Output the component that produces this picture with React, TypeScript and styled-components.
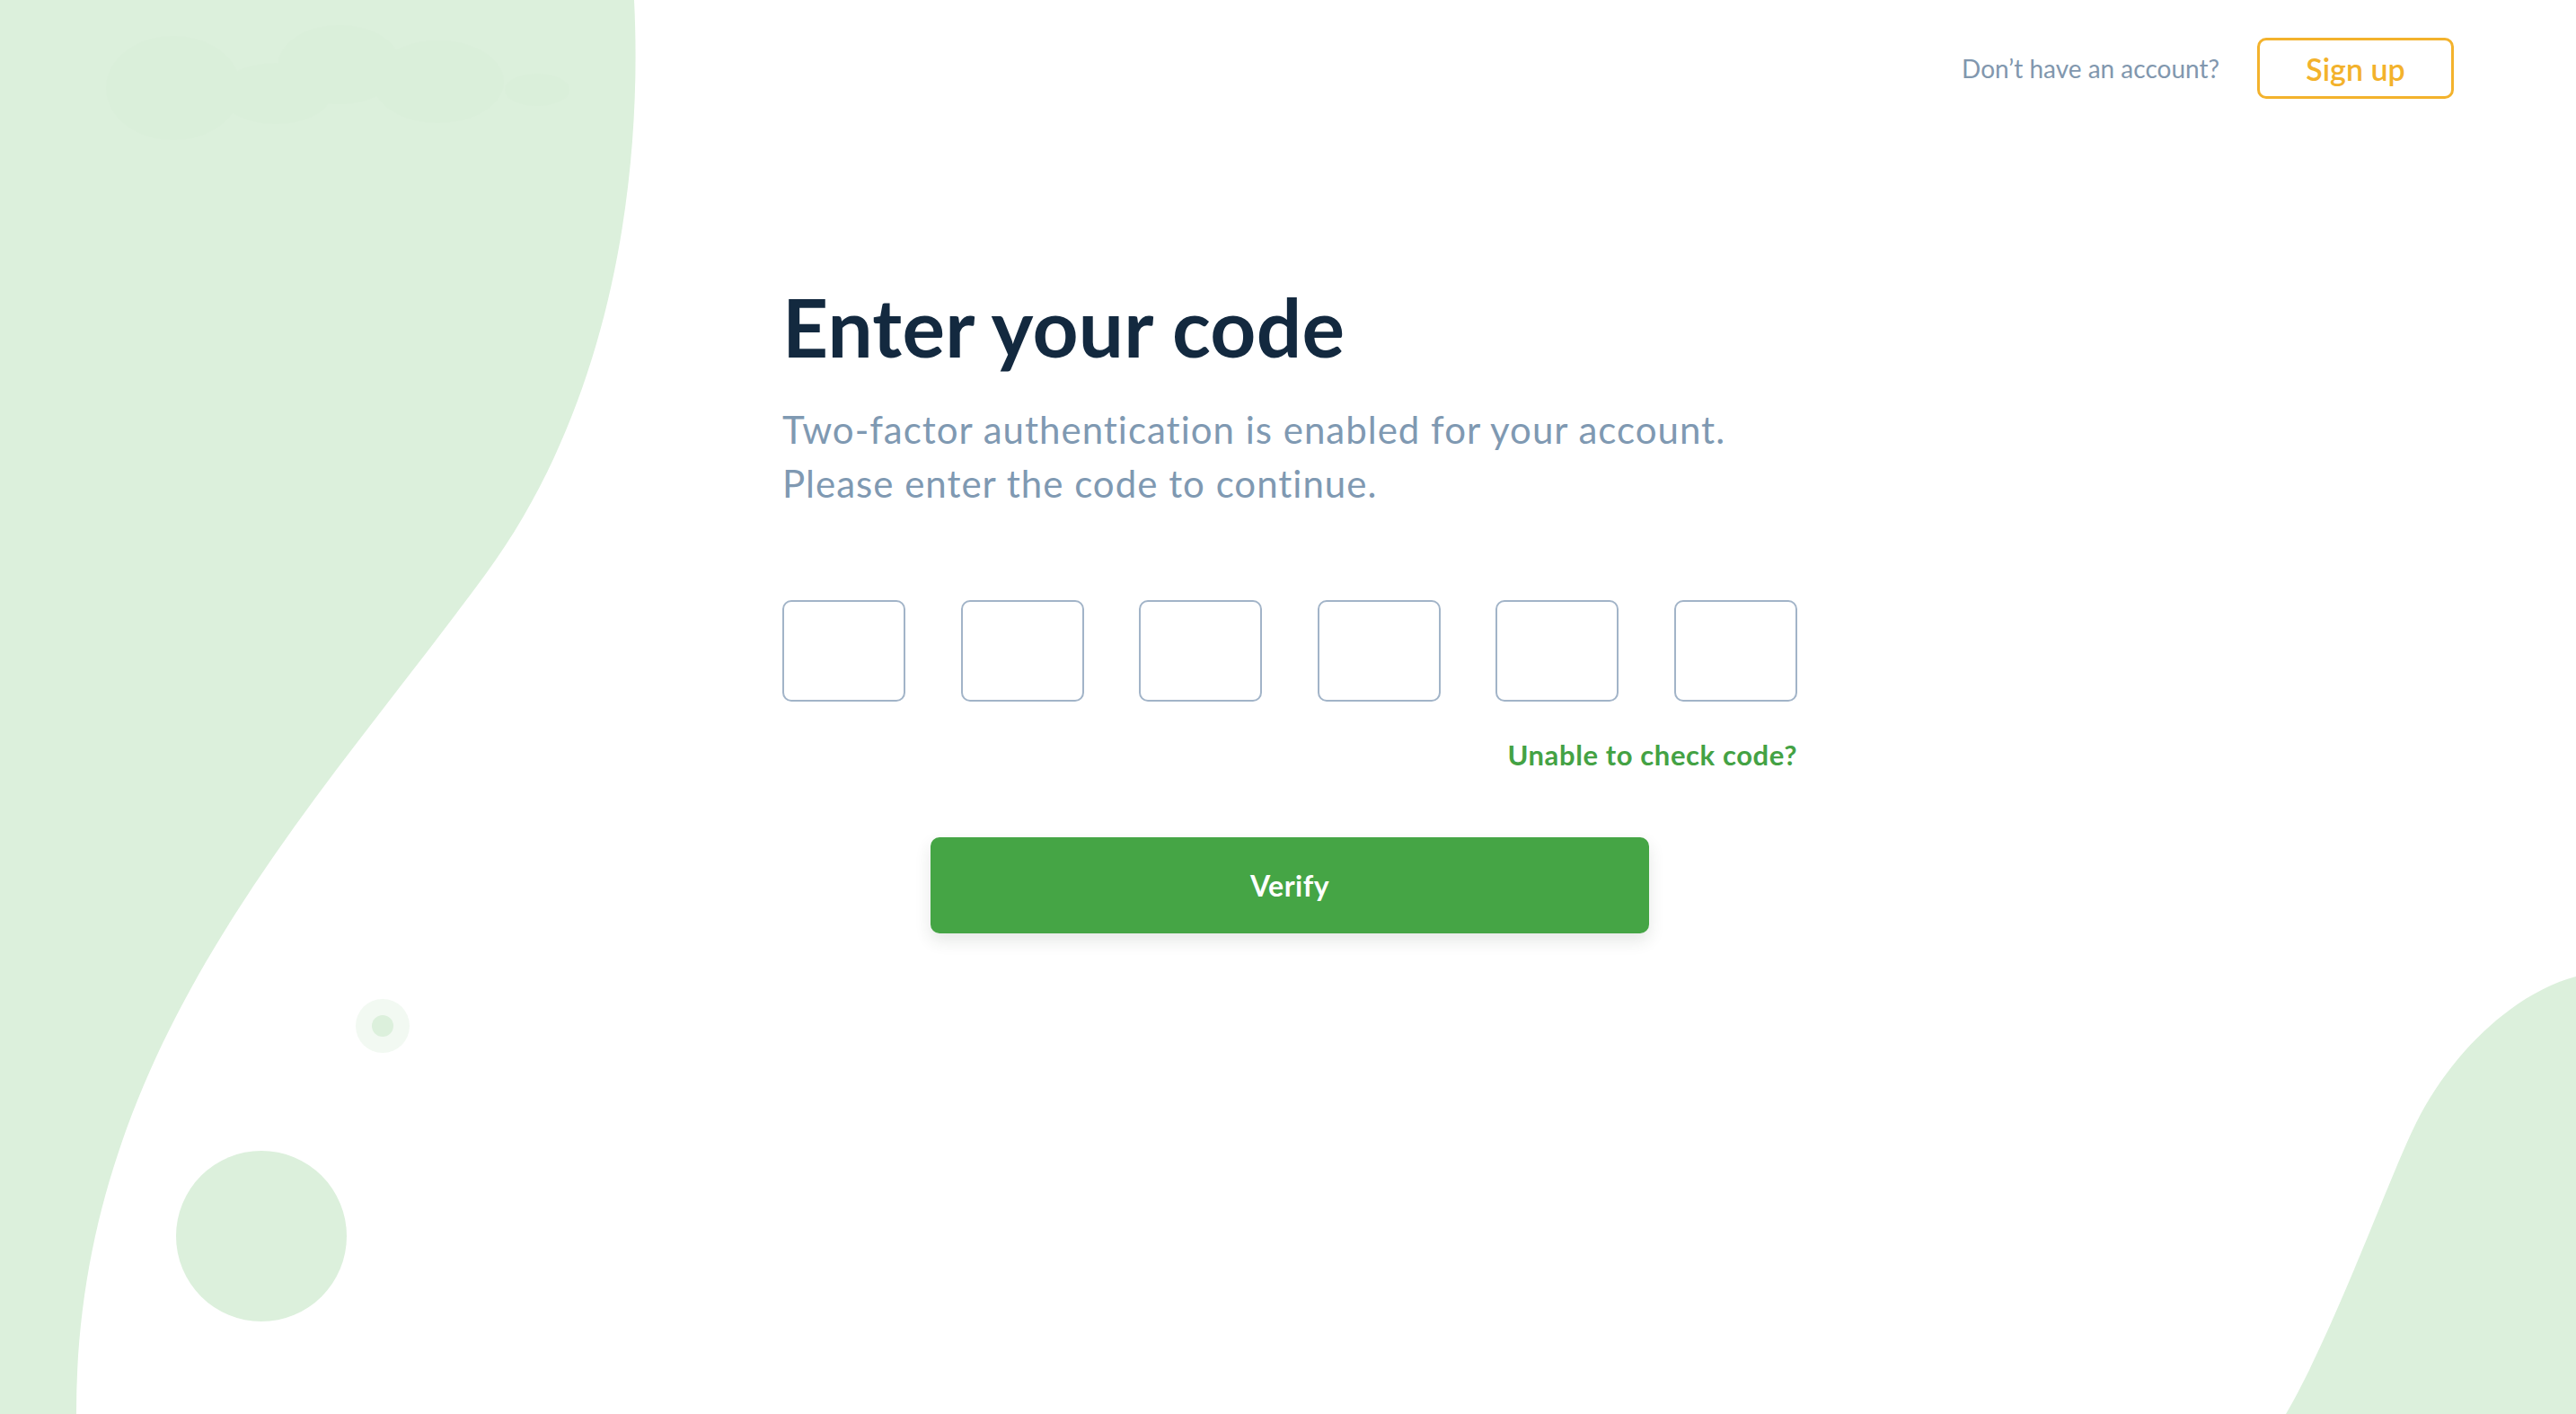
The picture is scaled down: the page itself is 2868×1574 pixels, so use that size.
import React from 'react'
import styled, {createGlobalStyle} from 'styled-components'

const GlobalStyle = createGlobalStyle`
  html, body {
    margin: 0;
    padding: 0;
    background: #fff;
  }
  body {
    font-family: Lato, "Noto Sans", sans-serif;
    -webkit-font-smoothing: antialiased;
  }
`

const Page = styled.div`
  position: relative;
  width: 100%;
  height: 100vh;
  overflow: hidden;
  display: flex;
  flex-direction: column;
`

const Backdrop = styled.svg`
  position: absolute;
  inset: 0;
  width: 100%;
  height: 100%;
  z-index: 0;
`

const Header = styled.header`
  position: relative;
  z-index: 1;
  display: flex;
  justify-content: flex-end;
  align-items: center;
  gap: 42px;
  padding: 42px 136px 0 0;
`

const HeaderText = styled.span`
  font-size: 28px;
  color: #8197ae;
`

const SignUpButton = styled.button`
  box-sizing: border-box;
  width: 219px;
  height: 68px;
  border: 3px solid #f3b22c;
  border-radius: 10px;
  background: transparent;
  color: #f3b22c;
  font-family: Lato, sans-serif;
  font-size: 34px;
  font-weight: 600;
  cursor: pointer;
`

const Main = styled.main`
  position: relative;
  z-index: 1;
  width: 1130px;
  margin: 209px 0 0 calc(50% - 563px);
  display: flex;
  flex-direction: column;
`

const Title = styled.h1`
  margin: 0;
  font-size: 89px;
  line-height: 1;
  font-weight: 700;
  color: #13293f;
  letter-spacing: 0.3px;
`

const Subtitle = styled.p`
  margin: 40px 0 0;
  font-size: 42px;
  line-height: 60px;
  font-weight: 400;
  letter-spacing: 1px;
  color: #7f99b2;
`

const CodeRow = styled.div`
  margin-top: 100px;
  display: flex;
  justify-content: space-between;
`

const CodeBox = styled.input`
  box-sizing: border-box;
  width: 137px;
  height: 113px;
  border: 2px solid #a2b4c8;
  border-radius: 10px;
  background: #fff;
  font-family: Lato, sans-serif;
  font-size: 48px;
  text-align: center;
  color: #13293f;
  outline: none;
`

const HelpLink = styled.a`
  align-self: flex-end;
  margin-top: 41px;
  font-size: 31px;
  line-height: 36px;
  font-weight: 700;
  color: #44a244;
  text-decoration: none;
  letter-spacing: 0.6px;
`

const VerifyButton = styled.button`
  align-self: center;
  margin-top: 74px;
  width: 800px;
  height: 107px;
  border: none;
  border-radius: 10px;
  background: #45a545;
  color: #fff;
  font-family: Lato, sans-serif;
  font-size: 32px;
  font-weight: 700;
  letter-spacing: 0.5px;
  box-shadow: 0 8px 18px rgba(40, 60, 40, 0.12);
  cursor: pointer;
`

const BLOB = '#dcf0dc'

const LEFT_WAVE =
  'M0 0 L706 0 ' +
  'C716 200 680 450 540 640 ' +
  'C340 912 84 1170 85 1574 ' +
  'L0 1574 Z'

const RIGHT_WAVE =
  'M2868 1087 C2800 1105 2730 1170 2690 1250 C2660 1310 2600 1480 2545 1574 L2868 1574 Z'

export default function App() {
  return (
    <>
      <GlobalStyle />
      <Page>
        <Backdrop viewBox="0 0 2868 1574" preserveAspectRatio="none" aria-hidden>
          <path fill={BLOB} d={LEFT_WAVE} />
          <g fill="#d2e9d2" opacity="0.12">
            <ellipse cx="193" cy="98" rx="75" ry="58" />
            <ellipse cx="307" cy="104" rx="62" ry="34" />
            <ellipse cx="378" cy="72" rx="68" ry="44" />
            <ellipse cx="488" cy="91" rx="73" ry="46" />
            <ellipse cx="598" cy="100" rx="36" ry="18" />
          </g>
          <circle cx="426" cy="1142" r="30" fill="#f2f9f2" />
          <circle cx="426" cy="1142" r="12" fill={BLOB} />
          <circle cx="291" cy="1376" r="95" fill={BLOB} />
          <path fill={BLOB} d={RIGHT_WAVE} />
        </Backdrop>
        <Header>
          <HeaderText>Don’t have an account?</HeaderText>
          <SignUpButton type="button">Sign up</SignUpButton>
        </Header>
        <Main>
          <Title>Enter your code</Title>
          <Subtitle>
            Two-factor authentication is enabled for your account.
            <br />
            Please enter the code to continue.
          </Subtitle>
          <CodeRow>
            {[0, 1, 2, 3, 4, 5].map((i) => (
              <CodeBox key={i} type="text" maxLength={1} aria-label={`Digit ${i + 1}`} />
            ))}
          </CodeRow>
          <HelpLink href="#">Unable to check code?</HelpLink>
          <VerifyButton type="button">Verify</VerifyButton>
        </Main>
      </Page>
    </>
  )
}
